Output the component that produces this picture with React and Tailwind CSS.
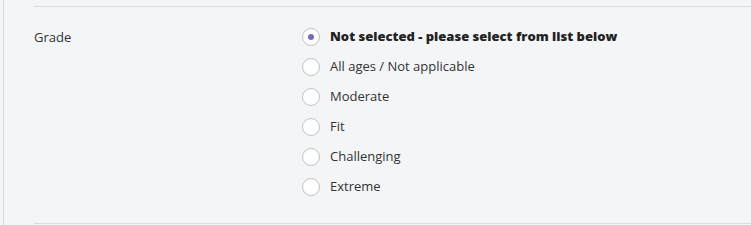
const options = [
  "Not selected - please select from list below",
  "All ages / Not applicable",
  "Moderate",
  "Fit",
  "Challenging",
  "Extreme",
];

export default function App() {
  return (
    <div className="w-[751px] h-[225px] bg-[#f4f5f7] pl-[3px] font-['Open_Sans',sans-serif] text-[13px] text-[#333]">
      <div className="h-full border-l border-[#dcdcdc] pl-[30px] pt-[6px]">
        <div className="border-t border-[#dcdcdc] border-b flex pt-[15px] pb-[21px]">
          <div className="w-[268px] leading-[30px]">Grade</div>
          <div className="flex flex-col">
            {options.map((o, i) => (
              <label key={o} className="flex items-center h-[30px] gap-[10px]">
                <span className="w-[18px] h-[18px] rounded-full border border-[#c4c4c4] bg-white flex items-center justify-center">
                  {i === 0 && <span className="w-[6px] h-[6px] rounded-full bg-[#7b68c4]" />}
                </span>
                <span className={i === 0 ? "font-extrabold text-[#222]" : ""}>{o}</span>
              </label>
            ))}
          </div>
        </div>
      </div>
    </div>
  );
}
